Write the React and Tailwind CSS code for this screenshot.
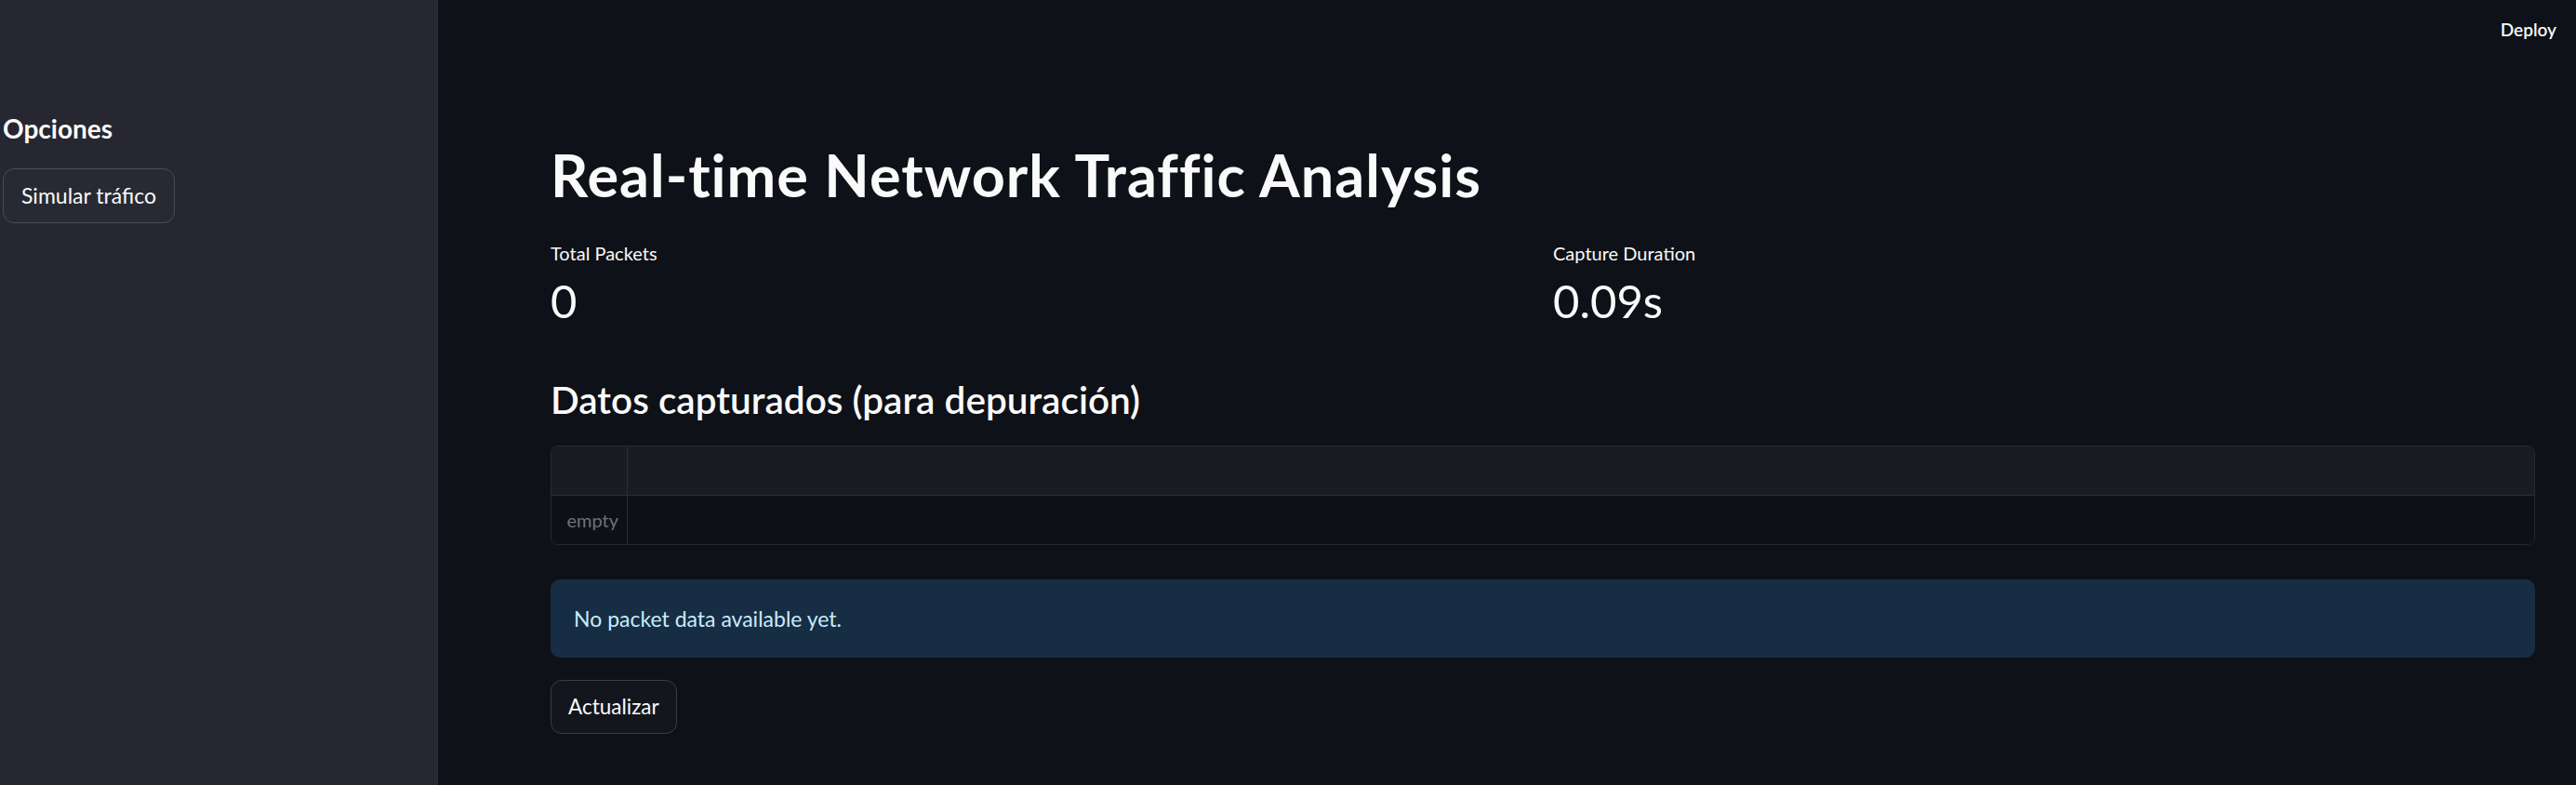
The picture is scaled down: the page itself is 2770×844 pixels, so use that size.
import React from 'react';

const font = { fontFamily: 'Lato, "Noto Sans", sans-serif' };

function Sidebar() {
  return (
    <aside className="w-[471px] shrink-0 bg-[#262730] border-r border-[#2c2d36] pl-[3px] pt-[121px]">
      <h2 className="text-[28px] leading-[34px] font-bold text-[#fafafa]">Opciones</h2>
      <button className="mt-[26px] h-[59px] px-[19px] rounded-[12px] border border-[#4b4c55] bg-[#282a33] text-[23px] text-[#fafafa]">
        Simular tráfico
      </button>
    </aside>
  );
}

function Metric({ label, value }) {
  return (
    <div>
      <div className="text-[20px] leading-[24px] text-[#fafafa]">{label}</div>
      <div className="mt-[10px] text-[49px] leading-[59px] text-[#fafafa]">{value}</div>
    </div>
  );
}

export default function App() {
  return (
    <div style={font} className="flex h-[844px] w-[2770px] bg-[#0e1117] text-[#fafafa] overflow-hidden">
      <Sidebar />
      <main className="flex-1 flex flex-col">
        <div className="h-0 relative">
          <div className="absolute right-[21px] top-[20px] text-[19px] leading-[24px] font-semibold text-[#fafafa]">
            Deploy
          </div>
        </div>
        <div className="pl-[121px] pr-[44px] pt-[150px] flex flex-col">
          <h1 className="text-[63px] leading-[76px] font-bold tracking-[1px]">Real-time Network Traffic Analysis</h1>

          <div className="mt-[34px] grid grid-cols-2 gap-[22px]">
            <Metric label="Total Packets" value="0" />
            <Metric label="Capture Duration" value="0.09s" />
          </div>

          <h3 className="mt-[52px] text-[40.5px] leading-[50px] font-semibold">Datos capturados (para depuración)</h3>

          <div className="mt-[24px] rounded-[8px] border border-[#272930] overflow-hidden">
            <div className="flex h-[53px] bg-[#1a1c24] border-b border-[#2c2e35]">
              <div className="w-[82px] border-r border-[#2c2e35]" />
              <div className="flex-1" />
            </div>
            <div className="flex h-[52px] bg-[#0e1016]">
              <div className="w-[82px] border-r border-[#2c2e35] flex items-center justify-end pr-[9px] text-[20px] text-[#6f727a]">
                empty
              </div>
              <div className="flex-1" />
            </div>
          </div>

          <div className="mt-[37px] h-[84px] rounded-[10px] bg-[#172d43] flex items-center px-[25px] text-[23px] text-[#c7ebff]">
            No packet data available yet.
          </div>

          <div className="mt-[24px]">
            <button className="h-[58px] px-[18px] rounded-[12px] border border-[#3b3d45] bg-[#13161d] text-[22.5px] text-[#fafafa]">
              Actualizar
            </button>
          </div>
        </div>
      </main>
    </div>
  );
}
